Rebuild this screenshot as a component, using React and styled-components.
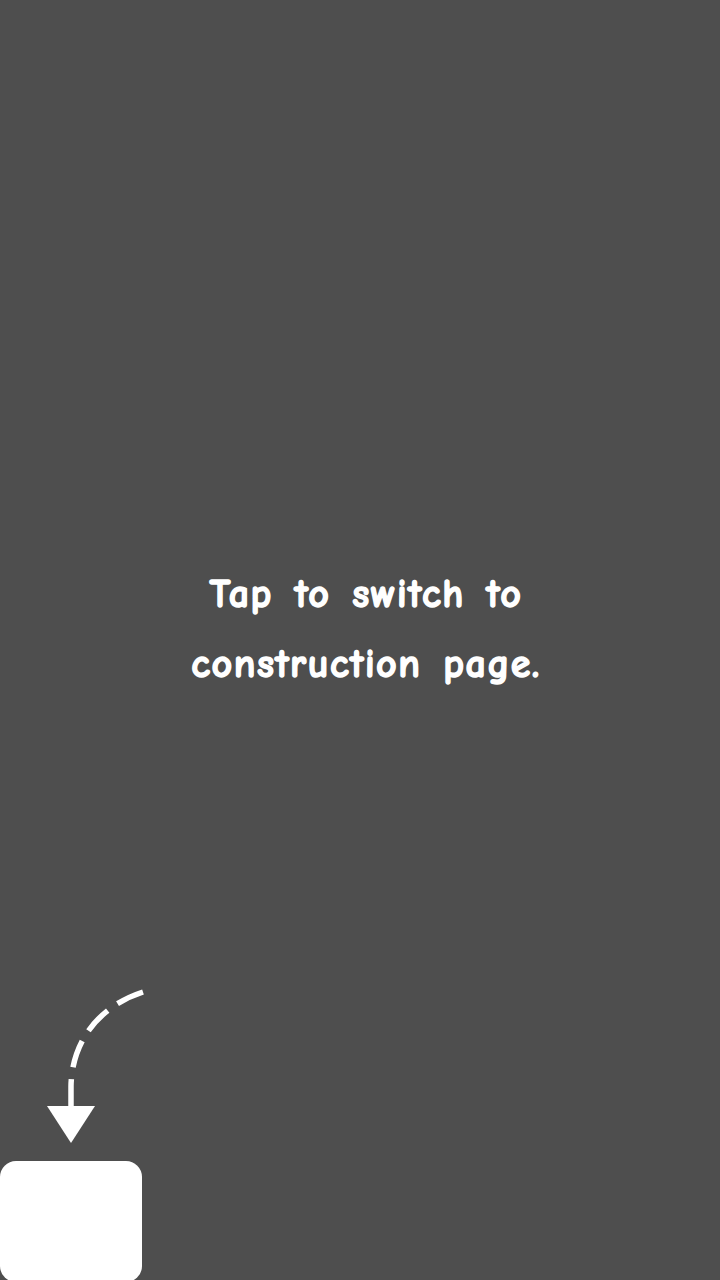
import React from "react";
import styled, { createGlobalStyle } from "styled-components";

const GlobalStyle = createGlobalStyle`
  html, body {
    margin: 0;
    padding: 0;
    background: #4e4e4e;
  }
`;

const Page = styled.div`
  position: relative;
  height: 1280px;
  width: 720px;
  overflow: hidden;
  background: #4e4e4e;
  display: flex;
  align-items: center;
  justify-content: center;
`;

const Message = styled.p`
  margin: 0 0 22px 12px;
  color: #fff;
  font-family: "Comic Sans MS", "Comic Neue", "Open Sans", sans-serif;
  font-weight: 700;
  font-size: 40px;
  line-height: 70px;
  letter-spacing: 1.5px;
  word-spacing: 6px;
  text-align: center;
  -webkit-text-stroke: 1.4px #fff;
`;

const Hint = styled.div`
  position: absolute;
  left: 0;
  bottom: -2px;
  display: flex;
  flex-direction: column;
`;

const TapBox = styled.button`
  width: 142px;
  height: 121px;
  margin-top: 11px;
  border: none;
  border-radius: 16px;
  background: #fff;
  cursor: pointer;
`;

const CurvedArrow = () => (
  <svg width="150" height="170" viewBox="0 980 150 170" style={{ display: "block" }}>
    <path
      d="M143 992 C 100 1006, 72 1040, 71 1086 L 71 1108"
      fill="none"
      stroke="#fff"
      strokeWidth="5.5"
      strokeDasharray="28 12"
    />
    <polygon points="47,1106 95,1106 71,1143" fill="#fff" />
  </svg>
);

export default function App() {
  return (
    <>
      <GlobalStyle />
      <Page>
        <Message>
          Tap to switch to
          <br />
          construction page.
        </Message>
        <Hint>
          <CurvedArrow />
          <TapBox aria-label="switch to construction page" />
        </Hint>
      </Page>
    </>
  );
}
